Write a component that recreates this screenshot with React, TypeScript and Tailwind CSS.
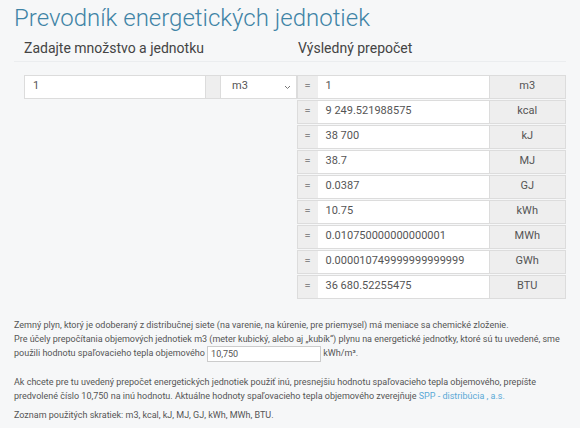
import React, { useState } from "react";

const units = [
  { unit: "m3", factor: 1 },
  { unit: "kcal", factor: 9249.521988575 },
  { unit: "kJ", factor: 38700 },
  { unit: "MJ", factor: 38.7 },
  { unit: "GJ", factor: 0.0387 },
  { unit: "kWh", factor: 10.75 },
  { unit: "MWh", factor: 0.010750000000000001 },
  { unit: "GWh", factor: 0.000010749999999999999 },
  { unit: "BTU", factor: 36680.52255475 },
];

const display = [
  "1",
  "9 249.521988575",
  "38 700",
  "38.7",
  "0.0387",
  "10.75",
  "0.010750000000000001",
  "0.000010749999999999999",
  "36 680.52255475",
];

export default function App() {
  const [amount, setAmount] = useState("1");
  const [unit, setUnit] = useState("m3");
  const [heat, setHeat] = useState("10,750");

  return (
    <div
      className="min-h-[428px] w-[580px] bg-[#f6f7f8] text-[#555]"
      style={{ fontFamily: "Roboto, 'Liberation Sans', sans-serif" }}
    >
      <div className="px-[14px] pt-[3px]">
        <h1 className="text-[24px] leading-[30px] font-light text-[#3f84a6]">
          Prevodník energetických jednotiek
        </h1>
        <div className="mt-[5px] flex border-b border-[#ebedef] pb-[3px] pl-[10px] text-[14px] leading-[20px] text-[#444]">
          <div className="w-[274px]">Zadajte množstvo a jednotku</div>
          <div>Výsledný prepočet</div>
        </div>

        <div className="mt-[13px] flex pl-[10px]">
          <div className="flex h-[24px] w-[274px] border border-[#dcdcdc]">
            <input
              value={amount}
              onChange={(e) => setAmount(e.target.value)}
              className="w-[180px] bg-white px-[8px] pb-[2px] text-[11px] text-[#555] outline-none"
            />
            <div className="w-[16px] border-x border-[#dcdcdc] bg-[#eeeeee]" />
            <div className="relative flex flex-1 items-center bg-white">
              <select
                value={unit}
                onChange={(e) => setUnit(e.target.value)}
                className="h-[22px] w-full appearance-none bg-transparent py-0 pb-[2px] pl-[11px] text-[11px] leading-[20px] text-[#555] outline-none"
              >
                {units.map((u) => (
                  <option key={u.unit}>{u.unit}</option>
                ))}
              </select>
              <svg
                className="pointer-events-none absolute top-[9px] right-[5px]"
                width="7"
                height="5"
                viewBox="0 0 7 5"
              >
                <path d="M1 1l2.5 2.5L6 1" fill="none" stroke="#777" strokeWidth="1" />
              </svg>
            </div>
          </div>

          <div className="flex w-[271px] flex-col gap-px bg-[#f6f7f8]">
            {units.map((u, i) => (
              <div key={u.unit} className="flex h-[24px] border border-[#dcdcdc] text-[11px]">
                <div className="flex w-[20px] items-center justify-center bg-[#eeeeee] pb-[1px] text-[#888]">=</div>
                <div className="flex w-[171px] items-center bg-white px-[8px] pb-[1px] text-[#555]">{display[i]}</div>
                <div className="flex flex-1 items-center justify-center border-l border-[#dcdcdc] bg-[#eeeeee] pb-[1px] text-[#555]">
                  {u.unit}
                </div>
              </div>
            ))}
          </div>
        </div>

        <div className="mt-[19px] text-[9px] leading-[14px] text-[#555]">
          <p>
            Zemný plyn, ktorý je odoberaný z distribučnej siete (na varenie, na kúrenie, pre priemysel) má
            meniace sa chemické zloženie.
            <br />
            Pre účely prepočítania objemových jednotiek m3 (meter kubický, alebo aj „kubík“) plynu na energetické
            jednotky, ktoré sú tu uvedené, sme použili hodnotu spaľovacieho tepla objemového{" "}
            <input
              value={heat}
              onChange={(e) => setHeat(e.target.value)}
              className="h-[16px] w-[114px] border border-[#ccc] bg-white px-[3px] align-middle text-[9px] outline-none"
            />{" "}
            kWh/m³.
          </p>
          <p className="mt-[13px]">
            Ak chcete pre tu uvedený prepočet energetických jednotiek použiť inú, presnejšiu hodnotu spaľovacieho
            tepla objemového, prepíšte predvolené číslo 10,750 na inú hodnotu. Aktuálne hodnoty spaľovacieho
            tepla objemového zverejňuje <a className="text-[#5aa9d6]">SPP - distribúcia , a.s.</a>
          </p>
          <p className="mt-[5px]">Zoznam použitých skratiek: m3, kcal, kJ, MJ, GJ, kWh, MWh, BTU.</p>
        </div>
      </div>
    </div>
  );
}
